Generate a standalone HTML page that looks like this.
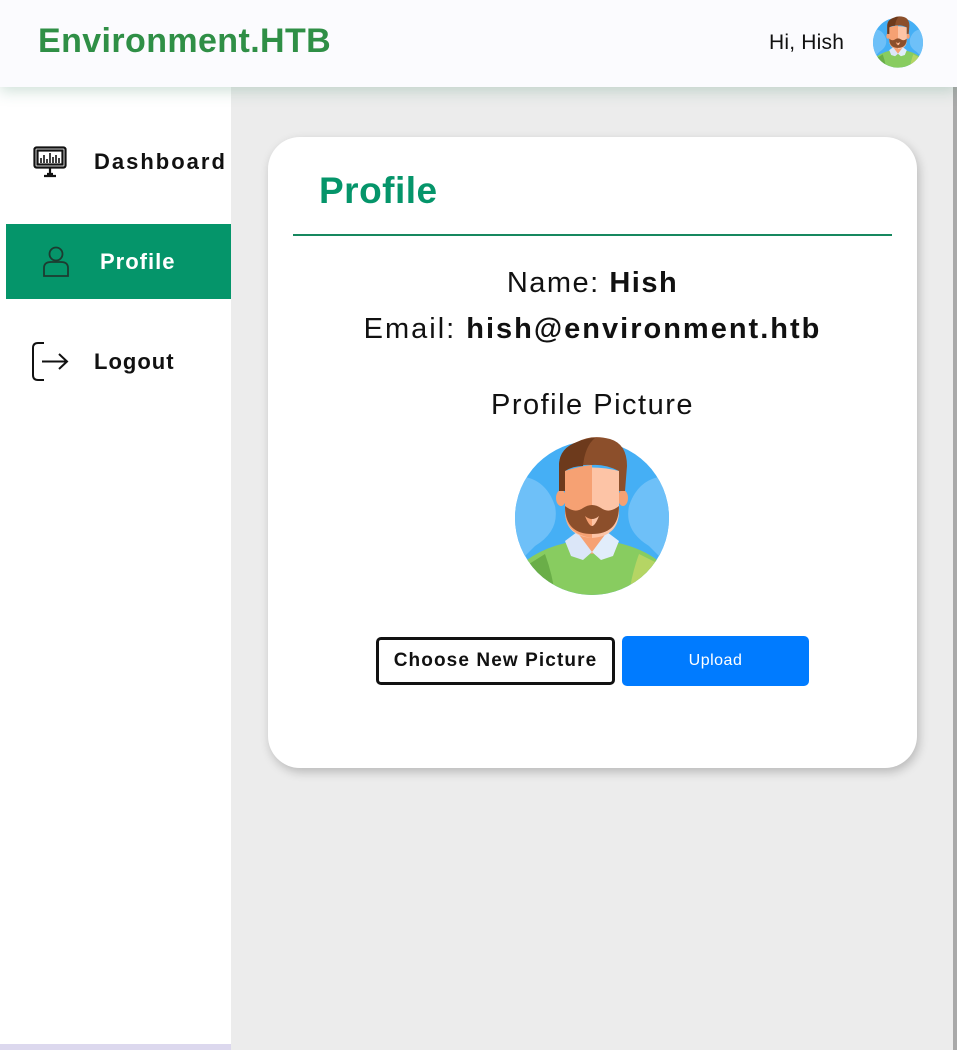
<!DOCTYPE html>
<html><head><meta charset="utf-8"><style>
*{margin:0;padding:0;box-sizing:border-box}
body{width:957px;height:1050px;overflow:hidden;background:#ececec;font-family:"Liberation Sans",sans-serif;position:relative}
.hdr{position:absolute;left:0;top:0;width:957px;height:87px;background:#fbfbfe;box-shadow:0 4px 14px rgba(60,130,100,.25);z-index:3}
.logo{position:absolute;left:38px;top:22px;font-size:34px;font-weight:bold;color:#2f8f46;letter-spacing:0.4px}
.hi{position:absolute;left:769px;top:31px;font-size:21px;color:#111;letter-spacing:0.2px}
.side{position:absolute;left:0;top:87px;width:231px;height:963px;background:#fff}
.sidebot{position:absolute;left:0;top:1044px;width:231px;height:6px;background:#dcd8ee}
.item{position:absolute;left:0;font-size:22px;font-weight:bold;color:#111}
.act{position:absolute;left:6px;top:224px;width:225px;height:75px;background:#05956a}
.rb{position:absolute;right:0;top:87px;width:4px;height:963px;background:#a9a9a9}
.card{position:absolute;left:268px;top:137px;width:649px;height:631px;background:#fff;border-radius:32px;box-shadow:2px 4px 10px rgba(0,0,0,.22)}
.ttl{position:absolute;left:51px;top:33px;font-size:37px;font-weight:bold;color:#05956a;letter-spacing:0.5px}
.line{position:absolute;left:25px;top:97px;width:599px;height:2px;background:#16885f}
.c{position:absolute;left:0;width:649px;text-align:center;color:#111;font-size:29px;letter-spacing:1.5px}
.b1{position:absolute;left:108px;top:500px;width:239px;height:48px;border:3px solid #111;border-radius:5px;font-size:19px;font-weight:bold;text-align:center;line-height:42px;color:#111;letter-spacing:1.1px}
.b2{position:absolute;left:354px;top:499px;width:187px;height:50px;background:#007bff;border-radius:5px;color:#fff;font-size:16px;text-align:center;line-height:50px;letter-spacing:0.5px}
</style></head><body>
<svg width="0" height="0" style="position:absolute"><defs>
<symbol id="av" viewBox="0 0 154 160">
<clipPath id="cc"><circle cx="77" cy="82" r="77"/></clipPath>
<g clip-path="url(#cc)">
<rect width="154" height="160" fill="#45aff5"/>
<path d="M0 40 Q30 40 40 70 Q45 95 20 110 L0 130Z" fill="#6ec0f8"/>
<path d="M154 40 Q124 40 114 70 Q109 95 134 110 L154 130Z" fill="#6ec0f8"/>
<path d="M0 135 Q20 112 60 105 L94 105 Q134 112 154 135 L154 160 L0 160Z" fill="#88cc60"/>
<path d="M30 118 Q38 140 40 160 L28 160 Q22 140 14 128Z" fill="#6aae48"/>
<path d="M124 118 Q116 140 114 160 L134 160 L148 130Z" fill="#b5d564"/>
<path d="M62 96 L92 96 L92 112 L77 118 L62 112Z" fill="#f6a173"/>
<path d="M50 105 L62 96 L77 116 L68 124 L56 120Z" fill="#dbe6f8"/>
<path d="M104 105 L92 96 L77 116 L86 124 L98 120Z" fill="#e1edfb"/>
</g>
<ellipse cx="46" cy="62" rx="5" ry="8" fill="#f6a173"/>
<ellipse cx="108" cy="62" rx="5" ry="8" fill="#f6a173"/>
<path d="M50 35 Q77 28 104 35 L104 75 Q104 100 77 102 Q50 100 50 75Z" fill="#fdc4a6"/>
<path d="M50 35 Q65 30 77 29 L77 102 Q50 98 50 75Z" fill="#f6a173"/>
<path d="M44 55 L44 28 Q45 12 62 6 Q77 -2 95 3 Q112 8 112 30 L110 55 L104 55 L104 35 Q90 28 77 29 Q60 28 50 35 L50 55Z" fill="#8c4f2b"/>
<path d="M44 55 L44 28 Q45 12 62 6 Q72 2 80 2 Q70 10 68 30 Q58 30 50 35 L50 55Z" fill="#6d3a1c"/>
<path d="M50 70 Q60 78 68 72 Q77 66 86 72 Q94 78 104 70 Q104 98 77 98 Q50 98 50 70Z M70 80 Q77 86 84 80 Q80 90 77 90 Q74 90 70 80Z" fill="#8c4f2b" fill-rule="evenodd"/>
</symbol>
</defs></svg>
<div class="hdr">
<div class="logo">Environment.HTB</div>
<div class="hi">Hi, Hish</div>
<svg style="position:absolute;left:873px;top:16px" width="50" height="52"><use href="#av"/></svg>
</div>
<div class="side"></div>
<div class="sidebot"></div>
<div class="act"></div>
<svg style="position:absolute;left:33px;top:146px" width="34" height="32" viewBox="0 0 34 32" fill="none" stroke="#111" stroke-width="2.2">
<rect x="1.5" y="1.5" width="31" height="20" rx="2"/><rect x="4.5" y="4.5" width="25" height="14"/>
<path d="M8 17V12M11 17V9M14 17V13M17 17V7M20 17V11M23 17V9M26 17V12" stroke-width="1.6"/>
<path d="M17 22V28M11 30H23M14 28h6"/></svg>
<div class="item" style="left:94px;top:149px;letter-spacing:2px">Dashboard</div>
<svg style="position:absolute;left:42px;top:246px" width="28" height="31" viewBox="0 0 28 31" fill="none" stroke="#1d3b30" stroke-width="1.8">
<circle cx="14" cy="8" r="6.5"/><path d="M2 30V22Q2 16 9 16H19Q26 16 26 22V30Z"/></svg>
<div class="item" style="left:100px;top:249px;color:#fff;letter-spacing:1px">Profile</div>
<svg style="position:absolute;left:32px;top:342px" width="37" height="39" viewBox="0 0 37 39" fill="none" stroke="#111" stroke-width="2">
<path d="M12 1H6Q1 1 1 6V33Q1 38 6 38H12"/><path d="M10 19.5H35M27 12L35 19.5L27 27"/></svg>
<div class="item" style="left:94px;top:349px;letter-spacing:1px">Logout</div>
<div class="rb"></div>
<div class="card">
<div class="ttl">Profile</div>
<div class="line"></div>
<div class="c" style="top:130px">Name: <b>Hish</b></div>
<div class="c" style="top:176px;letter-spacing:2px">Email: <b>hish@environment.htb</b></div>
<div class="c" style="top:252px">Profile Picture</div>
<svg style="position:absolute;left:247px;top:299px" width="154" height="160"><use href="#av"/></svg>
<div class="b1">Choose New Picture</div>
<div class="b2">Upload</div>
</div>
</body></html>
